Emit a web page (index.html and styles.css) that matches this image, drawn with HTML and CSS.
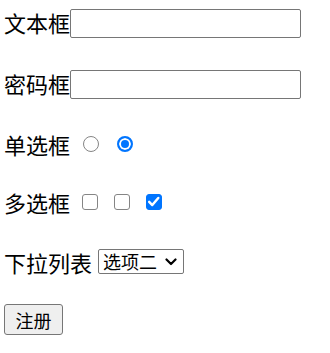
FILE: index.html
```html
<!DOCTYPE html>
<html lang="zh-CN">
<head>
<meta charset="utf-8">
<title>注册</title>
<link rel="stylesheet" href="styles.css">
</head>
<body>
<form class="form">
  <div class="row row-text">
    <label class="label">文本框</label><input class="text-input" type="text">
  </div>
  <div class="row row-text">
    <label class="label">密码框</label><input class="text-input" type="password">
  </div>
  <div class="row">
    <label class="label">单选框</label>
    <input class="radio" type="radio" name="r">
    <input class="radio" type="radio" name="r" checked>
  </div>
  <div class="row">
    <label class="label">多选框</label>
    <input class="check" type="checkbox">
    <input class="check" type="checkbox">
    <input class="check" type="checkbox" checked>
  </div>
  <div class="row">
    <label class="label">下拉列表</label>
    <select class="select">
      <option>选项一</option>
      <option selected>选项二</option>
      <option>选项三</option>
    </select>
  </div>
  <div class="row row-button">
    <button class="button" type="button">注册</button>
  </div>
</form>
</body>
</html>
```
FILE: styles.css
```css
html, body {
  margin: 0;
  background: #ffffff;
}

.form {
  display: flex;
  flex-direction: column;
  padding: 9px 0 0 4px;
  font-family: "Noto Sans CJK SC", "Noto Sans", sans-serif;
  color: #000000;
}

.row {
  display: flex;
  align-items: center;
  height: 29px;
}

.row:nth-child(2) { margin-top: 32px; }
.row:nth-child(3) { margin-top: 30px; }
.row:nth-child(4) { margin-top: 29px; }
.row:nth-child(5) { margin-top: 31px; }
.row:nth-child(6) { margin-top: 28px; }

.label {
  font-size: 22px;
  line-height: 1;
  white-space: nowrap;
}

.row-text .label {
  margin-bottom: 4px;
}

.text-input {
  box-sizing: border-box;
  width: 231px;
  height: 29px;
  margin: 0;
  padding: 0 3px;
  border: 1px solid #767676;
  border-radius: 2px;
  background: #ffffff;
  font-size: 16px;
}

.radio {
  appearance: none;
  -webkit-appearance: none;
  box-sizing: border-box;
  width: 16px;
  height: 16px;
  margin: 0 0 0 18px;
  border: 1.5px solid #858585;
  border-radius: 50%;
  background: #ffffff;
}

.radio:first-of-type {
  margin-left: 13px;
}

.radio:checked {
  border: 2px solid #0075ff;
  background: #0075ff;
  box-shadow: inset 0 0 0 2px #ffffff;
}

.check {
  appearance: none;
  -webkit-appearance: none;
  box-sizing: border-box;
  width: 16px;
  height: 16px;
  margin: 0 0 0 16px;
  border: 1.5px solid #858585;
  border-radius: 3px;
  background: #ffffff;
}

.check:first-of-type {
  margin-left: 12px;
}

.check:checked {
  border-color: #0075ff;
  background: #0075ff url("data:image/svg+xml,%3Csvg xmlns='http://www.w3.org/2000/svg' width='16' height='16' viewBox='0 0 16 16'%3E%3Cpolyline points='3.6,8.2 6.6,11.2 12.4,4.4' fill='none' stroke='%23fff' stroke-width='2.4' stroke-linecap='round' stroke-linejoin='round'/%3E%3C/svg%3E") no-repeat -1.5px -1.5px;
}

.select {
  appearance: none;
  -webkit-appearance: none;
  box-sizing: border-box;
  width: 86px;
  height: 25px;
  margin: 0 0 0 6px;
  padding: 0 0 0 4px;
  border: 1px solid #767676;
  border-radius: 2px;
  background: #ffffff url("data:image/svg+xml,%3Csvg xmlns='http://www.w3.org/2000/svg' width='12' height='8' viewBox='0 0 12 8'%3E%3Cpolyline points='1.5,1.5 6,6 10.5,1.5' fill='none' stroke='%23000' stroke-width='2.2' stroke-linecap='round' stroke-linejoin='round'/%3E%3C/svg%3E") no-repeat right 6px center;
  font-family: "Noto Sans CJK SC", "Noto Sans", sans-serif;
  font-size: 18px;
  line-height: 23px;
  color: #000000;
}

.row-button {
  height: 31px;
}

.button {
  box-sizing: border-box;
  width: 59px;
  height: 31px;
  margin: 0;
  padding: 0;
  border: 1px solid #767676;
  border-radius: 3px;
  background: #efefef;
  font-family: "Noto Sans CJK SC", "Noto Sans", sans-serif;
  font-size: 18px;
  line-height: 1;
  color: #000000;
}
```
